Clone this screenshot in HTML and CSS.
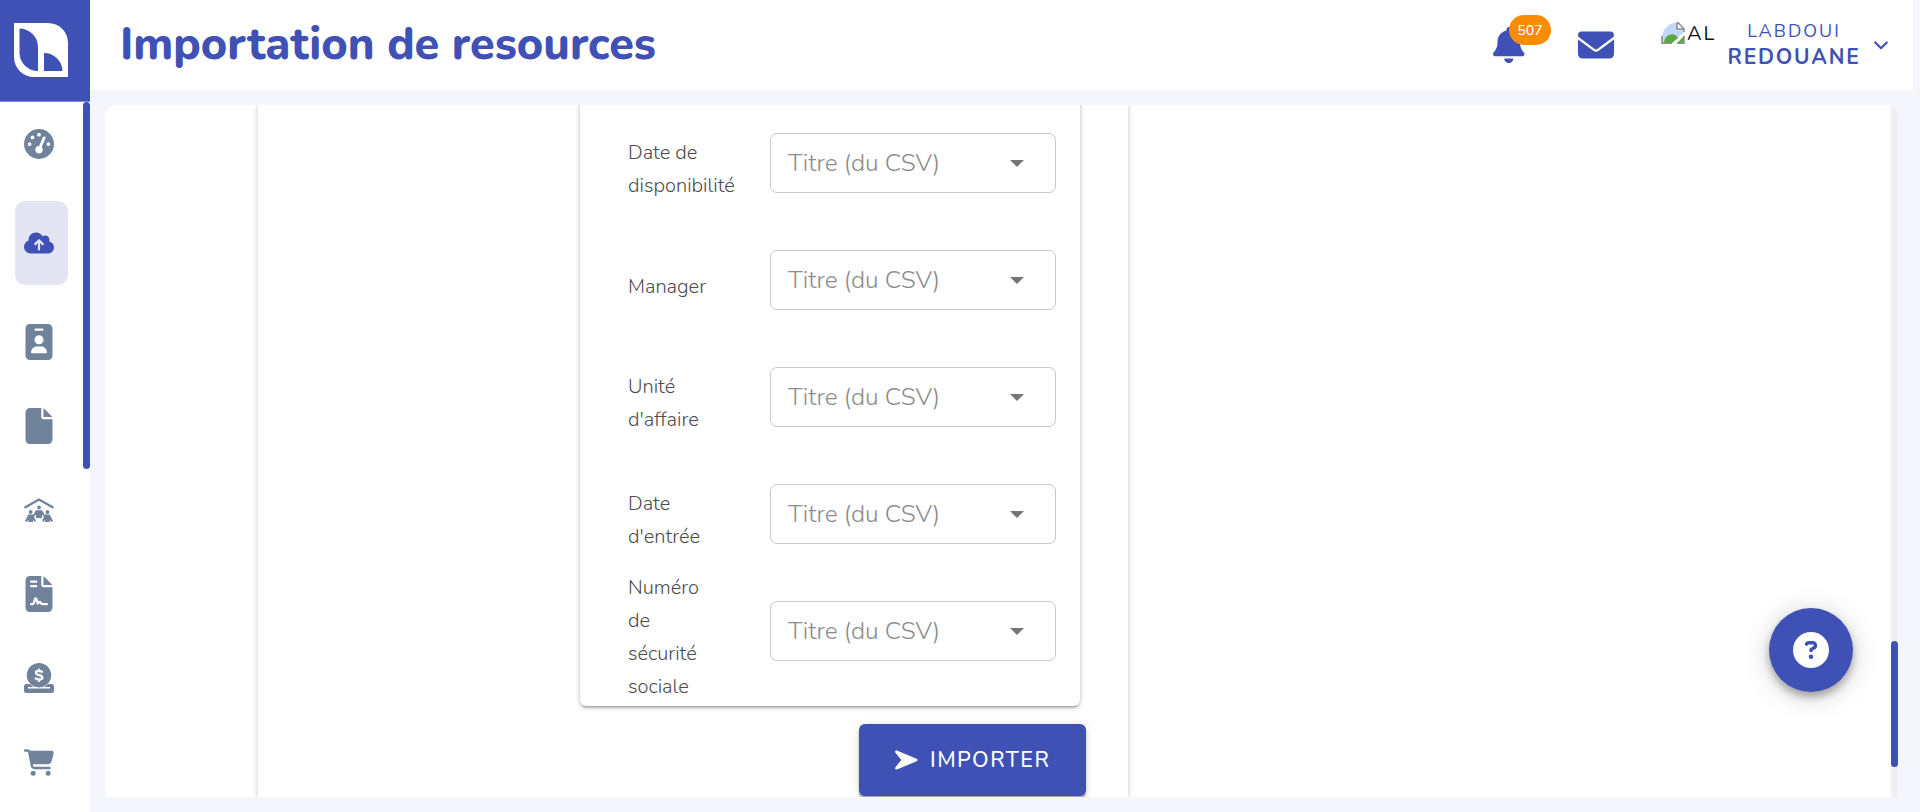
FILE: index.html
```html
<!DOCTYPE html>
<html lang="fr">
<head>
<meta charset="utf-8">
<title>Importation de resources</title>
<link rel="stylesheet" href="styles.css">
</head>
<body>
<div class="app">
  <aside class="sidebar">
    <a class="logo">
      <svg width="54" height="54" viewBox="0 0 54 54"><path fill="#fff" d="M0 0H34A20 20 0 0 1 54 20V54H20A20 20 0 0 1 0 34Z"/><path fill="#3f51b5" d="M5.500 5.500A18.500 18.500 0 0 1 24 24V48A18.500 18.500 0 0 1 5.500 30ZM30 30A18.500 18.500 0 0 1 48.500 48H30Z"/></svg>
    </a>
    <div class="nav-scroll">
      <nav class="nav">
        <a class="nav-item"><svg width="30" height="30" viewBox="0 0 512 512"><path d="M0 256a256 256 0 1 1 512 0A256 256 0 1 1 0 256zM288 96a32 32 0 1 0 -64 0 32 32 0 1 0 64 0zM256 416c35.300 0 64-28.700 64-64c0-17.400-6.900-33.100-18.100-44.600L366 161.700c5.300-12.100-.2-26.300-12.300-31.600s-26.300 .2-31.600 12.300L257.900 288c-.6 0-1.300 0-1.900 0c-35.300 0-64 28.700-64 64s28.700 64 64 64zM176 144a32 32 0 1 0 -64 0 32 32 0 1 0 64 0zM96 288a32 32 0 1 0 0-64 32 32 0 1 0 0 64zm352-32a32 32 0 1 0 -64 0 32 32 0 1 0 64 0z"/></svg></a>
        <a class="nav-item active"><svg width="30" height="24" viewBox="0 0 640 512"><path d="M144 480C64.500 480 0 415.500 0 336c0-62.800 40.200-116.200 96.200-135.900c-.1-2.700-.2-5.400-.2-8.100c0-88.400 71.600-160 160-160c59.300 0 111 32.200 138.700 80.200C409.900 102 428.300 96 448 96c53 0 96 43 96 96c0 12.200-2.300 23.800-6.400 34.600C596 238.400 640 290.100 640 352c0 70.700-57.300 128-128 128H144zm79-217c-9.400 9.400-9.400 24.600 0 33.900s24.600 9.400 33.900 0l39-39V392c0 13.300 10.700 24 24 24s24-10.700 24-24V257.900l39 39c9.400 9.400 24.600 9.400 33.900 0s9.400-24.600 0-33.900l-80-80c-9.400-9.400-24.600-9.400-33.900 0l-80 80z"/></svg></a>
        <a class="nav-item"><svg width="28" height="36" viewBox="-7 0 398 512"><path fill-rule="evenodd" d="M64 0C28.700 0 0 28.700 0 64V448c0 35.300 28.700 64 64 64H320c35.300 0 64-28.700 64-64V64c0-35.300-28.700-64-64-64H64zm96 320h64c44.200 0 80 35.800 80 80c0 8.800-7.200 16-16 16H96c-8.800 0-16-7.200-16-16c0-44.200 35.800-80 80-80zm-32-96a64 64 0 1 1 128 0 64 64 0 1 1 -128 0zM144 64h96c8.800 0 16 7.200 16 16s-7.200 16-16 16H144c-8.800 0-16-7.200-16-16s7.200-16 16-16z"/></svg></a>
        <a class="nav-item"><svg width="28" height="36" viewBox="-7 0 398 512"><path d="M0 64C0 28.700 28.700 0 64 0H224V128c0 17.700 14.300 32 32 32H384V448c0 35.300-28.700 64-64 64H64c-35.300 0-64-28.700-64-64V64zm384 64H256V0L384 128z"/></svg></a>
        <a class="nav-item"><svg width="30" height="24" viewBox="0 0 30 24"><path d="M1.300 9.200 15 1.600 28.700 9.200" fill="none" stroke="currentColor" stroke-width="2.300" stroke-linecap="round" stroke-linejoin="round"/><circle cx="15" cy="9.400" r="1.900"/><circle cx="6.600" cy="14" r="1.900"/><circle cx="23.400" cy="14" r="1.900"/><path d="M12 12.200h6l3.200 5.400-1.500.9-1.700-2.300v3.800h-6v-3.800l-1.700 2.300-1.500-.9zM4.400 16.600h4.400l3.200 6.200-1.600.9-1.400-2V24H4.200v-2.300L2.600 24 .9 23zM25.600 16.600h-4.400L18 22.800l1.600.9 1.400-2V24h4.800v-2.300l1.600 2.300 1.700-1z"/></svg></a>
        <a class="nav-item"><svg width="28" height="36" viewBox="-7 0 398 512"><path d="M0 64C0 28.700 28.700 0 64 0H224V128c0 17.700 14.300 32 32 32H384V448c0 35.300-28.700 64-64 64H64c-35.300 0-64-28.700-64-64V64zm384 64H256V0L384 128z"/><path d="M80 80h72M80 144h72M80 400h18c12 0 18-8 22-20l16-52c6-14 16-14 20 0l18 64c12-18 28-34 42-10 8 14 14 18 24 18h64" fill="none" stroke="#fff" stroke-width="32" stroke-linecap="round" stroke-linejoin="round"/></svg></a>
        <a class="nav-item"><svg width="30" height="30" viewBox="0 0 30 30"><path fill-rule="evenodd" d="M2.500 21H6q2 2 4 3H4v1.500h22V24h-6q2-1 4-3h3.500a2.500 2.500 0 0 1 2.500 2.500v4a2.500 2.500 0 0 1-2.500 2.500h-25A2.500 2.500 0 0 1 0 27.500v-4A2.500 2.500 0 0 1 2.500 21z"/><circle cx="15" cy="12.200" r="12.200"/><path d="M18 8.800c-2.600-1.300-6-1.300-6 .9 0 3.200 6.400 1.700 6.400 4.900 0 2.600-4 2.300-6.700.9M15 6.500v1.800m0 8v1.800" fill="none" stroke="#fff" stroke-width="2.200" stroke-linecap="round"/></svg></a>
        <a class="nav-item"><svg width="30" height="27" viewBox="0 0 576 512"><path d="M0 24C0 10.700 10.700 0 24 0H69.500c22 0 41.500 12.800 50.600 32h411c26.300 0 45.500 25 38.600 50.400l-41 152.300c-8.500 31.400-37 53.300-69.500 53.300H170.700l5.400 28.500c2.200 11.300 12.100 19.500 23.600 19.500H488c13.300 0 24 10.700 24 24s-10.700 24-24 24H199.700c-34.600 0-64.300-24.600-70.700-58.500L77.400 54.500c-.7-3.800-4-6.500-7.900-6.500H24C10.700 48 0 37.300 0 24zM128 464a48 48 0 1 1 96 0 48 48 0 1 1 -96 0zm336-48a48 48 0 1 1 0 96 48 48 0 1 1 0-96z"/></svg></a>
      </nav>
      <div class="nav-thumb"></div>
    </div>
  </aside>
  <div class="page">
    <header class="header">
      <h1 class="title">Importation de resources</h1>
      <div class="bell">
        <svg width="31.500" height="36" viewBox="0 0 448 512"><path d="M224 0c-17.700 0-32 14.300-32 32V51.200C119 66 64 130.600 64 208v18.800c0 47-17.300 92.400-48.500 127.600l-7.400 8.300c-8.400 9.400-10.400 22.900-5.300 34.400S19.400 416 32 416H416c12.600 0 24-7.400 29.200-18.900s3.100-25-5.300-34.400l-7.400-8.300C401.300 319.200 384 273.900 384 226.800V208c0-77.400-55-142-128-156.800V32c0-17.700-14.300-32-32-32zm45.300 493.300c12-12 18.700-28.300 18.700-45.300H224 160c0 17 6.700 33.300 18.700 45.300s28.300 18.700 45.300 18.700s33.300-6.700 45.300-18.700z"/></svg>
        <span class="badge">507</span>
      </div>
      <svg class="mail" width="36" height="36" viewBox="0 0 512 512"><path d="M48 64C21.500 64 0 85.500 0 112c0 15.100 7.100 29.300 19.200 38.400L236.800 313.600c11.400 8.500 27 8.500 38.400 0L492.800 150.400c12.100-9.100 19.200-23.300 19.200-38.400c0-26.500-21.500-48-48-48H48zM0 176V384c0 35.300 28.700 64 64 64H448c35.300 0 64-28.700 64-64V176L294.400 339.200c-22.800 17.100-54 17.100-76.800 0L0 176z"/></svg>
      <div class="avatar">
        <svg width="24" height="24" viewBox="0 0 24 24"><path d="M1 22V15C2 9 7 3 13 2h3l1 6h6v3L11 22z" fill="#c3d7f7"/><path d="M3 22c1-10 11-11 14-5l-6 5zM23 15v7h-7z" fill="#58ab3c"/><path d="M16 1v7h7v3M23 8l-6-6.500M1 15v7.200h10M16 22.200h7V15" fill="none" stroke="#919191" stroke-width="1.600"/></svg>
        <span class="alt">AL</span>
      </div>
      <div class="user"><span class="last">LABDOUI</span><span class="first">REDOUANE</span></div>
      <svg class="chevron" width="14" height="9" viewBox="0 0 14 9"><path d="M1.300 1.500 7 7.200l5.700-5.700" fill="none" stroke="currentColor" stroke-width="2.200" stroke-linecap="round" stroke-linejoin="round"/></svg>
    </header>
    <main class="content">
      <section class="outer">
        <div class="mapping">
          <div class="row"><label class="label">Date de disponibilité</label><div class="select"><span class="ph">Titre (du CSV)</span><i class="caret"></i></div></div>
          <div class="row"><label class="label">Manager</label><div class="select"><span class="ph">Titre (du CSV)</span><i class="caret"></i></div></div>
          <div class="row"><label class="label">Unité d'affaire</label><div class="select"><span class="ph">Titre (du CSV)</span><i class="caret"></i></div></div>
          <div class="row"><label class="label">Date d'entrée</label><div class="select"><span class="ph">Titre (du CSV)</span><i class="caret"></i></div></div>
          <div class="row"><label class="label">Numéro de sécurité sociale</label><div class="select"><span class="ph">Titre (du CSV)</span><i class="caret"></i></div></div>
        </div>
        <button class="import"><svg width="23" height="20" viewBox="0 0 24 20"><path fill="#fff" d="M.3 2.300C-.5.8.8-.2 2.500.3L22.500 8.600c1.500.7 1.500 2.100 0 2.800L2.500 19.700C.8 20.200-.5 19.200.3 17.700L6.500 10z"/></svg><span class="import-text">IMPORTER</span></button>
      </section>
      <div class="track"><div class="thumb"></div></div>
    </main>
  </div>
  <button class="help"><svg width="36" height="36" viewBox="0 0 512 512"><path fill="#fff" d="M256 512A256 256 0 1 0 256 0a256 256 0 1 0 0 512zM169.800 165.300c7.900-22.300 29.100-37.300 52.800-37.300h58.300c34.900 0 63.100 28.300 63.100 63.100c0 22.600-12.100 43.500-31.700 54.800L280 264.400c-.2 13-10.900 23.600-24 23.600c-13.300 0-24-10.700-24-24V250.500c0-8.600 4.600-16.500 12.100-20.800l44.300-25.400c4.700-2.700 7.600-7.700 7.600-13.100c0-8.400-6.800-15.100-15.100-15.100H222.600c-3.400 0-6.400 2.100-7.500 5.300l-.4 1.200c-4.400 12.500-18.200 19-30.600 14.600s-19-18.200-14.600-30.600l.4-1.200zM224 352a32 32 0 1 1 64 0 32 32 0 1 1 -64 0z"/></svg></button>
</div>
</body>
</html>
```
FILE: styles.css
```css
* { box-sizing: border-box; }
body { margin: 0; background: #f5f6fb; font-family: Nunito, "Open Sans", "Noto Sans", sans-serif; color: #4c4c4c; overflow: hidden; }
svg { display: block; fill: currentColor; flex: none; }
button { border: 0; padding: 0; font: inherit; }
.app { display: flex; height: 812px; }
.sidebar { width: 90px; flex: none; background: #fff; display: flex; flex-direction: column; }
.logo { height: 102px; flex: none; background: #3f51b5; border-bottom: 1px solid #8b85ea; padding: 23px 0 0 14px; }
.nav-scroll { flex: 1; min-height: 0; display: flex; justify-content: space-between; }
.nav { padding-left: 15px; }
.nav-item { width: 53px; height: 84px; display: flex; align-items: center; justify-content: center; padding-right: 5px; color: #71839b; }
.nav-item.active { margin: 15px 0; background: #e3e5f3; border-radius: 10px; color: #3f51b5; }
.nav-thumb { width: 7px; height: 367px; border-radius: 4px; background: #3f51b5; }
.page { flex: 1; min-width: 0; display: flex; flex-direction: column; }
.header { height: 90px; width: 1823px; flex: none; background: #fff; color: #3f51b5; display: flex; align-items: center; padding-left: 30px; }
.title { margin: 0 auto 0 0; font-size: 45px; line-height: 60px; font-weight: 800; white-space: nowrap; }
.bell { position: relative; margin-right: 53.5px; }
.badge { position: absolute; left: 16px; top: -12px; width: 42px; height: 30px; border-radius: 15px; background: #fb8c00; color: #fff; font-size: 14px; font-weight: 500; line-height: 32px; text-align: center; }
.mail { margin-right: 47px; }
.avatar { display: flex; align-items: center; align-self: flex-start; margin-top: 20px; width: 56px; gap: 2px; color: #111; font-size: 20px; line-height: 28px; }
.avatar svg { margin-bottom: 3px; }
.alt { letter-spacing: 2px; }
.user { display: flex; flex-direction: column; align-items: center; width: 132px; margin: 0 14px 2px 11px; white-space: nowrap; }
.last { font-size: 18px; line-height: 26px; letter-spacing: 2px; }
.first { font-size: 21px; line-height: 27px; font-weight: 700; letter-spacing: 1.8px; }
.chevron { margin-right: 25px; }
.content { margin: 15px 22px 15px 15px; flex: 1; min-height: 0; background: #fff; border-radius: 12px 12px 0 0; display: flex; justify-content: space-between; overflow: hidden; }
.outer { width: 870px; margin-left: 153px; padding-left: 322px; box-shadow: 0 0 5px rgba(0,0,0,.25); }
.mapping { width: 500px; height: 621px; margin-top: -20px; padding: 25px 24px 0 48px; border-radius: 6px; box-shadow: 0 3px 3px -2px rgba(0,0,0,.35), 0 1px 5px rgba(0,0,0,.25); }
.row { height: 117px; display: flex; align-items: center; justify-content: space-between; }
.label { width: 88px; padding-top: 1px; font-size: 20px; font-weight: 300; line-height: 33px; }
.select { width: 286px; height: 60px; margin-bottom: 12px; border: 1px solid #c8c8c8; border-radius: 7px; padding: 1px 31px 0 17px; display: flex; align-items: center; justify-content: space-between; }
.ph { color: #8c8c8c; font-size: 24.5px; font-weight: 300; line-height: 33px; white-space: nowrap; }
.caret { border: 7px solid transparent; border-top-color: #757575; border-bottom: 0; }
.import { display: flex; align-items: center; gap: 12px; width: 227px; height: 72px; margin: 18px 0 0 279px; padding-left: 36px; border-radius: 6px; background: #3f51b5; color: #fff; font-size: 21.5px; font-weight: 500; box-shadow: 0 3px 2px rgba(0,0,0,.3), 0 1px 8px rgba(0,0,0,.15); }
.import-text { letter-spacing: 1.5px; }
.track { width: 7px; background: #f0f0f0; padding-top: 536px; }
.thumb { height: 126px; border-radius: 4px; background: #3f51b5; }
.help { position: fixed; left: 1769px; top: 608px; width: 84px; height: 84px; border-radius: 50%; background: #3f51b5; display: flex; align-items: center; justify-content: center; box-shadow: 0 5px 8px rgba(0,0,0,.3), 0 4px 28px rgba(0,0,0,.18); }
```
